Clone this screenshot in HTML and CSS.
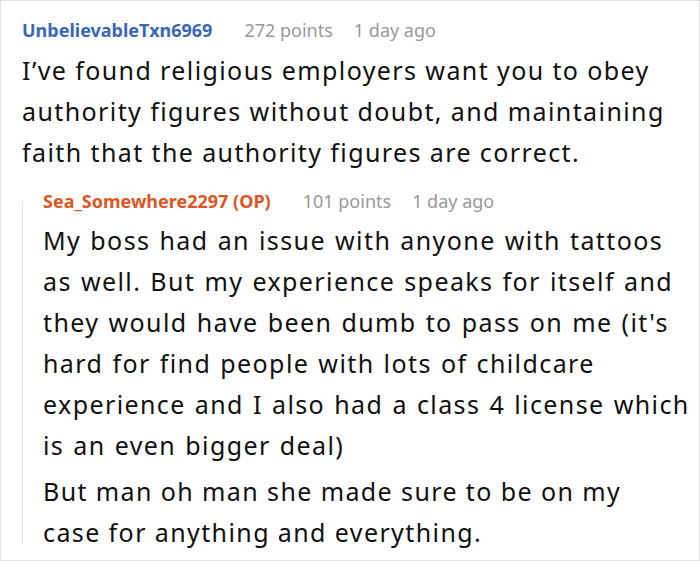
FILE: index.html
```html
<!DOCTYPE html>
<html lang="en">
<head>
<meta charset="utf-8">
<link rel="stylesheet" href="styles.css">
</head>
<body>
<div class="card">
  <div class="comment">
    <div class="meta">
      <span class="author">UnbelievableTxn6969</span>
      <span class="info">272 points</span>
      <span class="info">1 day ago</span>
    </div>
    <p class="text">I’ve found religious employers want you to obey authority figures without doubt, and maintaining faith that the authority figures are correct.</p>
    <div class="reply">
      <div class="thread"></div>
      <div class="reply-body">
        <div class="meta">
          <span class="author op">Sea_Somewhere2297 (OP)</span>
          <span class="info">101 points</span>
          <span class="info">1 day ago</span>
        </div>
        <p class="text lines wide">My boss had an issue with anyone with tattoos<br>as well. But my experience speaks for itself and<br>they would have been dumb to pass on me (it's<br>hard for find people with lots of childcare<br>experience and I also had a class 4 license which<br>is an even bigger deal)</p>
        <p class="text lines next">But man oh man she made sure to be on my<br>case for anything and everything.</p>
      </div>
    </div>
  </div>
</div>
</body>
</html>
```
FILE: styles.css
```css
html, body {
  margin: 0;
  padding: 0;
  background: #fff;
}
body {
  font-family: "Noto Sans", "Open Sans", sans-serif;
  color: #111;
}
.card {
  width: 700px;
  height: 561px;
  box-sizing: border-box;
  border: 1px solid #e2e2e2;
  overflow: hidden;
}
.comment {
  padding: 17px 0 0 21px;
  width: 677px;
}
.meta {
  display: flex;
  align-items: baseline;
  font-size: 18px;
  line-height: 24px;
}
.author {
  font-weight: 700;
  color: #3b68b5;
  margin-right: 32px;
}
.author.op {
  color: #dd5522;
}
.info {
  color: #999;
  margin-right: 21px;
}
.text {
  margin: 8px 0 0;
  font-size: 25px;
  letter-spacing: 1.4px;
  line-height: 41px;
}
.reply .text {
  margin-top: 7px;
}
.text.lines {
  white-space: nowrap;
}
.text.wide {
  word-spacing: 1.2px;
}
.reply .text.next {
  margin-top: 5px;
}
.reply {
  display: flex;
  margin-top: 16px;
}
.thread {
  width: 1px;
  flex: none;
  background: #e0e0e0;
  margin: 12px 0 9px;
}
.reply-body {
  padding-left: 20px;
  flex: 1;
  min-width: 0;
}
```
